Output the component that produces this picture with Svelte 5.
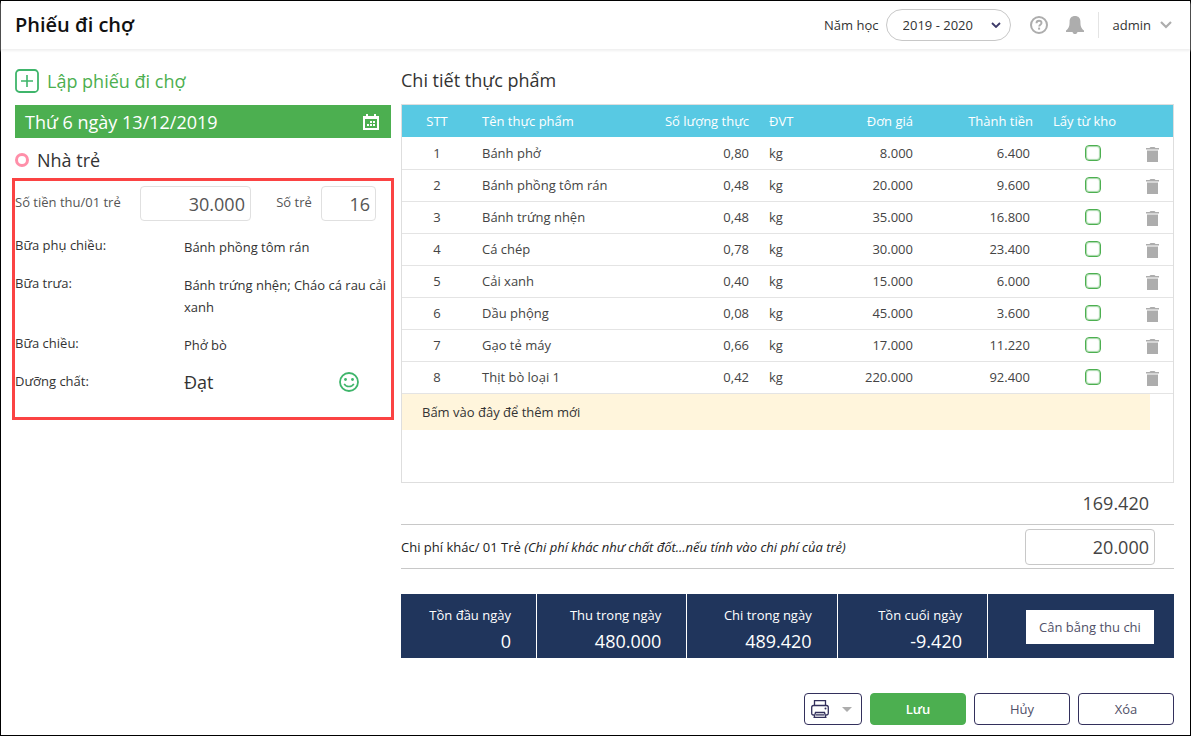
<script lang="ts">
  interface Food {
    name: string;
    qty: string;
    unit: string;
    price: string;
    total: string;
    fromStock: boolean;
  }

  let schoolYear = $state('2019 - 2020');
  let feePerChild = $state('30.000');
  let childCount = $state('16');
  let otherCost = $state('20.000');

  let foods = $state<Food[]>([
    { name: 'Bánh phở', qty: '0,80', unit: 'kg', price: '8.000', total: '6.400', fromStock: false },
    { name: 'Bánh phồng tôm rán', qty: '0,48', unit: 'kg', price: '20.000', total: '9.600', fromStock: false },
    { name: 'Bánh trứng nhện', qty: '0,48', unit: 'kg', price: '35.000', total: '16.800', fromStock: false },
    { name: 'Cá chép', qty: '0,78', unit: 'kg', price: '30.000', total: '23.400', fromStock: false },
    { name: 'Cải xanh', qty: '0,40', unit: 'kg', price: '15.000', total: '6.000', fromStock: false },
    { name: 'Dầu phộng', qty: '0,08', unit: 'kg', price: '45.000', total: '3.600', fromStock: false },
    { name: 'Gạo tẻ máy', qty: '0,66', unit: 'kg', price: '17.000', total: '11.220', fromStock: false },
    { name: 'Thịt bò loại 1', qty: '0,42', unit: 'kg', price: '220.000', total: '92.400', fromStock: false }
  ]);

  const meals = [
    { label: 'Bữa phụ chiều:', dishes: 'Bánh phồng tôm rán' },
    { label: 'Bữa trưa:', dishes: 'Bánh trứng nhện; Cháo cá rau cải xanh' },
    { label: 'Bữa chiều:', dishes: 'Phở bò' }
  ];

  const summary = [
    { label: 'Tồn đầu ngày', value: '0' },
    { label: 'Thu trong ngày', value: '480.000' },
    { label: 'Chi trong ngày', value: '489.420' },
    { label: 'Tồn cuối ngày', value: '-9.420' }
  ];

  function addFood() {
    foods.push({ name: '', qty: '', unit: 'kg', price: '', total: '', fromStock: false });
  }

  function removeFood(index: number) {
    foods.splice(index, 1);
  }
</script>

<div class="page">
  <header class="topbar">
    <h1>Phiếu đi chợ</h1>
    <div class="tools">
      <label for="year">Năm học</label>
      <div class="year">
        <select id="year" bind:value={schoolYear}>
          <option>2019 - 2020</option>
          <option>2018 - 2019</option>
        </select>
        <svg class="year-arrow" width="10" height="6" viewBox="0 0 10 6" aria-hidden="true">
          <path d="M1 1l4 4 4-4" fill="none" stroke="#3c3968" stroke-width="1.8" />
        </svg>
      </div>
      <button class="icon help" aria-label="Trợ giúp">
        <svg width="18" height="18" viewBox="0 0 18 18">
          <circle cx="9" cy="9" r="8" fill="none" stroke="#adadad" stroke-width="2" />
          <path d="M6.5 7.3c0-1.6 1-2.5 2.500-2.500s2.500.9 2.500 2.300c0 1.700-2.300 1.800-2.300 3.500" fill="none" stroke="#adadad" stroke-width="1.9" />
          <rect x="8.100" y="11.600" width="2" height="2" fill="#adadad" />
        </svg>
      </button>
      <button class="icon bell" aria-label="Thông báo">
        <svg width="18" height="18" viewBox="0 0 18 18">
          <path d="M9 0c3.4 0 5.4 2.2 5.4 5.4 0 4.4.6 6.8 3.6 9v1.5H0v-1.5c3-2.2 3.6-4.6 3.6-9C3.6 2.2 5.6 0 9 0z" fill="#adadad" />
          <path d="M6.6 15.900h4.800c0 1.500-1.200 2.100-2.400 2.100s-2.400-.6-2.400-2.100z" fill="#adadad" />
        </svg>
      </button>
      <button class="user">
        admin
        <svg width="12" height="8" viewBox="0 0 12 8" aria-hidden="true">
          <path d="M1 1l5 5 5-5" fill="none" stroke="#adadad" stroke-width="2.2" />
        </svg>
      </button>
    </div>
  </header>

  <main>
    <section class="plan">
      <button class="create">
        <svg width="24" height="24" viewBox="0 0 24 24" aria-hidden="true">
          <rect x="1" y="1" width="22" height="22" rx="3.5" fill="none" stroke="#3fb56b" stroke-width="1.8" />
          <path d="M12 6v12M6 12h12" stroke="#3fb56b" stroke-width="1.6" />
        </svg>
        Lập phiếu đi chợ
      </button>

      <div class="date">
        <span>Thứ 6 ngày 13/12/2019</span>
        <button class="icon" aria-label="Chọn ngày">
          <svg width="16" height="16" viewBox="0 0 16 16">
            <path d="M0 2h16v14H0zM2 5v9h12V5z" fill="#fff" fill-rule="evenodd" />
            <path d="M3 0h2v3H3zM11 0h2v3h-2z" fill="#fff" />
            <path d="M7 7h2v2H7zM10 7h2v2h-2zM4 10h2v2H4zM7 10h2v2H7zM10 10h2v2h-2z" fill="#fff" />
          </svg>
        </button>
      </div>

      <h2 class="group"><span class="ring"></span>Nhà trẻ</h2>

      <div class="details">
        <div class="fees">
          <label for="fee">Số tiền thu/01 trẻ</label>
          <input id="fee" class="fee" type="text" bind:value={feePerChild} />
          <label for="count">Số trẻ</label>
          <input id="count" class="count" type="text" bind:value={childCount} />
        </div>
        <dl>
          {#each meals as meal}
            <div class="meal">
              <dt>{meal.label}</dt>
              <dd>{meal.dishes}</dd>
            </div>
          {/each}
          <div class="meal">
            <dt>Dưỡng chất:</dt>
            <dd class="result">
              Đạt
              <svg width="20" height="20" viewBox="0 0 20 20" aria-hidden="true">
                <circle cx="10" cy="10" r="9" fill="none" stroke="#3fb56b" stroke-width="1.8" />
                <circle cx="6.5" cy="7.5" r="1.4" fill="#3fb56b" />
                <circle cx="13.5" cy="7.5" r="1.4" fill="#3fb56b" />
                <path d="M5.2 11.8c1.8 3.6 7.8 3.6 9.6 0" fill="none" stroke="#3fb56b" stroke-width="1.6" />
              </svg>
            </dd>
          </div>
        </dl>
      </div>
    </section>

    <section class="foods">
      <h2>Chi tiết thực phẩm</h2>

      <div class="grid">
        <table>
          <colgroup>
            <col class="c-no" />
            <col />
            <col class="c-qty" />
            <col class="c-unit" />
            <col class="c-price" />
            <col class="c-total" />
            <col class="c-stock" />
            <col class="c-del" />
          </colgroup>
          <thead>
            <tr>
              <th class="center">STT</th>
              <th>Tên thực phẩm</th>
              <th class="num">Số lượng thực</th>
              <th>ĐVT</th>
              <th class="num">Đơn giá</th>
              <th class="num">Thành tiền</th>
              <th>Lấy từ kho</th>
              <th></th>
            </tr>
          </thead>
          <tbody>
            {#each foods as food, i}
              <tr>
                <td class="center">{i + 1}</td>
                <td>{food.name}</td>
                <td class="num">{food.qty}</td>
                <td>{food.unit}</td>
                <td class="num">{food.price}</td>
                <td class="num total">{food.total}</td>
                <td class="center">
                  <input type="checkbox" aria-label="Lấy từ kho: {food.name}" bind:checked={food.fromStock} />
                </td>
                <td class="del">
                  <button class="icon" aria-label="Xóa {food.name}" onclick={() => removeFood(i)}>
                    <svg width="13" height="15" viewBox="0 0 13 15">
                      <path d="M0 1h3.5l1-1h4l1 1H13v1.500H0z" fill="#adadad" />
                      <path d="M1 3.5h11V15H1z" fill="#adadad" />
                    </svg>
                  </button>
                </td>
              </tr>
            {/each}
          </tbody>
        </table>
        <button class="add" onclick={addFood}>Bấm vào đây để thêm mới</button>
      </div>

      <div class="sum">169.420</div>

      <div class="other">
        <label for="other">Chi phí khác/ 01 Trẻ <em>(Chi phí khác như chất đốt...nếu tính vào chi phí của trẻ)</em></label>
        <input id="other" type="text" bind:value={otherCost} />
      </div>

      <div class="summary">
        {#each summary as item}
          <div class="cell">
            <span>{item.label}</span>
            <strong>{item.value}</strong>
          </div>
        {/each}
        <div class="balance">
          <button>Cân bằng thu chi</button>
        </div>
      </div>

      <footer>
        <button class="btn print" aria-label="In phiếu">
          <svg width="18" height="18" viewBox="0 0 18 18">
            <g fill="none" stroke="#33305c" stroke-width="1.3">
              <path d="M3.5 5.5V.7h11v4.8" />
              <path d="M3.5 15H2.4C1.3 15 .7 14.4.7 13.3V7.5c0-1.2.7-2 1.9-2h12.8c1.2 0 1.9.8 1.9 2v5.8c0 1.1-.6 1.7-1.7 1.7h-1.1" />
              <path d="M4.5 12.5h9l1.3 4.8H3.2z" />
              <path d="M5 14.9h8" />
            </g>
            <circle cx="14.5" cy="8.5" r="1" fill="#33305c" />
          </svg>
          <svg width="10" height="5" viewBox="0 0 10 5"><path d="M0 0h10L5 5z" fill="#adadad" /></svg>
        </button>
        <button class="btn save">Lưu</button>
        <button class="btn">Hủy</button>
        <button class="btn">Xóa</button>
      </footer>
    </section>
  </main>
</div>

<style>
  :global(body) {
    margin: 0;
    background: #fff;
  }

  .page {
    box-sizing: border-box;
    min-height: 100vh;
    border: 1px solid #000;
    font-family: 'Open Sans', 'Noto Sans', sans-serif;
    font-size: 13px;
    line-height: 22px;
    color: #333;
  }

  button,
  input,
  select {
    box-sizing: border-box;
    font: inherit;
    color: inherit;
  }

  button {
    padding: 0;
    border: none;
    background: none;
    cursor: pointer;
  }

  svg {
    display: block;
    flex: none;
  }

  h1,
  h2 {
    margin: 0;
    font-size: 18px;
    line-height: 24px;
    font-weight: 400;
  }

  h1 {
    font-size: 20px;
    font-weight: 600;
    color: #111;
  }

  .topbar {
    display: flex;
    align-items: center;
    justify-content: space-between;
    height: 48px;
    padding: 0 18px 0 14px;
    box-shadow: 0 2px 2px #f0f0f0;
  }

  .tools {
    display: flex;
    align-items: center;
  }

  .year {
    position: relative;
    margin: 0 19px 0 7px;
  }

  .year select {
    display: block;
    appearance: none;
    width: 125px;
    height: 32px;
    padding: 0 16px;
    border: 1px solid #c8c8c8;
    border-radius: 16px;
    background: #fff;
  }

  .year-arrow {
    position: absolute;
    right: 10px;
    top: 13px;
    pointer-events: none;
  }

  .bell {
    margin: 0 14px 0 18px;
  }

  .user {
    display: flex;
    align-items: center;
    gap: 9px;
    height: 26px;
    padding-left: 14px;
    border-left: 1px solid #e4e4e4;
  }

  main {
    display: flex;
    align-items: flex-start;
    gap: 10px;
    padding: 19px 16px 10px 14px;
  }

  .plan {
    flex: none;
    width: 376px;
  }

  .create {
    display: flex;
    align-items: center;
    gap: 8px;
    height: 24px;
    margin-top: 1px;
    font-size: 18px;
    color: #4caf50;
  }

  .date {
    display: flex;
    align-items: center;
    justify-content: space-between;
    height: 33px;
    margin-top: 12px;
    padding: 0 12px 0 10px;
    background: #4caf50;
    color: #fff;
    font-size: 18px;
    font-weight: 500;
  }

  .group {
    display: flex;
    align-items: center;
    gap: 8px;
    margin: 10px 0 6px;
  }

  .ring {
    box-sizing: border-box;
    width: 14px;
    height: 14px;
    border: 3px solid #ff8fa9;
    border-radius: 50%;
  }

  .details {
    margin: 0 -3px;
    padding: 5px 0 23px;
    border: 3px solid #fb4343;
  }

  .fees {
    display: flex;
    align-items: flex-start;
    justify-content: space-between;
    padding-right: 15px;
    color: #555;
  }

  .fees label {
    padding-top: 5px;
  }

  .fees input {
    height: 35px;
    padding: 0 5px;
    border: 1px solid #e0e0e0;
    border-radius: 4px;
    font-size: 18px;
    text-align: right;
  }

  .fee {
    width: 111px;
    margin-left: -6px;
  }

  .count {
    width: 55px;
    margin-left: -16px;
  }

  dl {
    display: grid;
    gap: 14px;
    margin: 13px 0 0;
  }

  .meal {
    display: grid;
    grid-template-columns: 169px 1fr;
  }

  dd {
    margin: 0;
    padding-top: 2px;
  }

  .result {
    display: flex;
    align-items: center;
    justify-content: space-between;
    padding: 0 32px 0 0;
    height: 24px;
    font-size: 18px;
  }

  .foods {
    flex: 1;
    min-width: 0;
  }

  .grid {
    box-sizing: border-box;
    min-height: 379px;
    margin-top: 12px;
    border: 1px solid #dedede;
  }

  table {
    width: 100%;
    table-layout: fixed;
    border-collapse: separate;
    border-spacing: 0;
    color: #444;
  }

  .c-no {
    width: 70px;
  }

  .c-qty {
    width: 110px;
  }

  .c-unit {
    width: 60px;
  }

  .c-price {
    width: 104px;
  }

  .c-total {
    width: 120px;
  }

  .c-stock {
    width: 100px;
  }

  .c-del {
    width: 30px;
  }

  th,
  td {
    box-sizing: border-box;
    height: 32px;
    padding: 0 10px 2px;
    border-bottom: 1px solid #e4e4e4;
    text-align: left;
    white-space: nowrap;
  }

  th {
    height: 33px;
    padding-bottom: 0;
    border-bottom-color: #fff;
    background: #58c9e3;
    background-clip: padding-box;
    color: #fff;
    font-weight: 500;
  }

  .center {
    text-align: center;
  }

  .num {
    text-align: right;
  }

  .total {
    padding-right: 13px;
  }

  .del {
    padding: 2px 3px 0;
  }

  .del button {
    display: block;
  }

  td input {
    display: block;
    appearance: none;
    width: 16px;
    height: 16px;
    margin: 0 auto;
    border: 1px solid #4caf50;
    border-radius: 4px;
    box-shadow: inset 0 0 1px 1px #a6d7a8;
    background: #fff;
  }

  td input:checked {
    background: #4caf50;
  }

  .add {
    display: block;
    width: calc(100% - 23px);
    height: 36px;
    padding: 0 20px;
    background: #fff5dc;
    text-align: left;
  }

  .sum {
    padding: 8px 25px 9px;
    border-bottom: 1px solid #c8c8c8;
    color: #444;
    font-size: 18px;
    line-height: 24px;
    text-align: right;
  }

  .other {
    display: flex;
    align-items: center;
    justify-content: space-between;
    height: 43px;
    padding-right: 19px;
    border-bottom: 1px solid #c8c8c8;
    color: #222;
  }

  .other input {
    width: 130px;
    height: 36px;
    padding: 0 5px;
    border: 1px solid #c8c8c8;
    border-radius: 4px;
    color: #444;
    font-size: 18px;
    text-align: right;
  }

  .summary {
    display: grid;
    grid-template-columns: 136px repeat(3, 1fr) 186px;
    height: 64px;
    margin-top: 25px;
    background: #20355c;
    color: #fff;
  }

  .cell {
    display: flex;
    flex-direction: column;
    justify-content: center;
    gap: 3px;
    padding: 4px 25px 0;
    border-right: 1px solid #fff;
    font-weight: 500;
    text-align: right;
    white-space: nowrap;
  }

  .cell strong {
    font-size: 18px;
    line-height: 24px;
    font-weight: 500;
  }

  .balance {
    display: flex;
    align-items: center;
    justify-content: flex-end;
    padding: 2px 20px 0 0;
  }

  .balance button {
    width: 128px;
    height: 34px;
    background: #fff;
    color: #505068;
  }

  footer {
    display: flex;
    justify-content: flex-end;
    gap: 8px;
    margin-top: 35px;
  }

  .btn {
    width: 96px;
    height: 32px;
    border: 1px solid #33305c;
    border-radius: 4px;
    color: #505068;
  }

  .print {
    display: flex;
    align-items: center;
    justify-content: space-between;
    width: 58px;
    padding: 0 9px 0 6px;
  }

  .save {
    border-color: #4caf50;
    background: #4caf50;
    color: #fff;
    font-weight: 600;
  }
</style>
